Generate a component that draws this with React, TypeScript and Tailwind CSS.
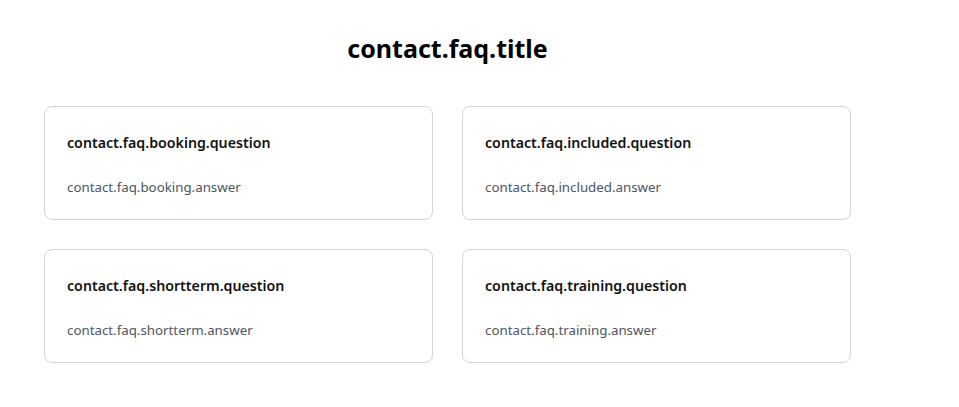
const FAQS = [
  { q: "contact.faq.booking.question", a: "contact.faq.booking.answer" },
  { q: "contact.faq.included.question", a: "contact.faq.included.answer" },
  { q: "contact.faq.shortterm.question", a: "contact.faq.shortterm.answer" },
  { q: "contact.faq.training.question", a: "contact.faq.training.answer" },
];

export default function App() {
  return (
    <div className="min-h-screen bg-white font-['Noto_Sans','Open_Sans',sans-serif] text-black">
      <section className="ml-[44px] w-[807px] pt-8">
        <h2 className="text-center text-[25px] leading-8 font-bold mb-[42px]">contact.faq.title</h2>

        <div className="grid grid-cols-2 gap-x-[29px] gap-y-[29px]">
          {FAQS.map((item) => (
            <div key={item.q} className="rounded-lg border border-[#d4d4d4] bg-white px-[22px] pt-[25px] pb-[22px]">
              <h3 className="text-[14.2px] leading-[22px] font-semibold text-[#111]">{item.q}</h3>
              <p className="mt-[23px] text-[13.3px] leading-5 text-[#4b5563]">{item.a}</p>
            </div>
          ))}
        </div>
      </section>
    </div>
  );
}
